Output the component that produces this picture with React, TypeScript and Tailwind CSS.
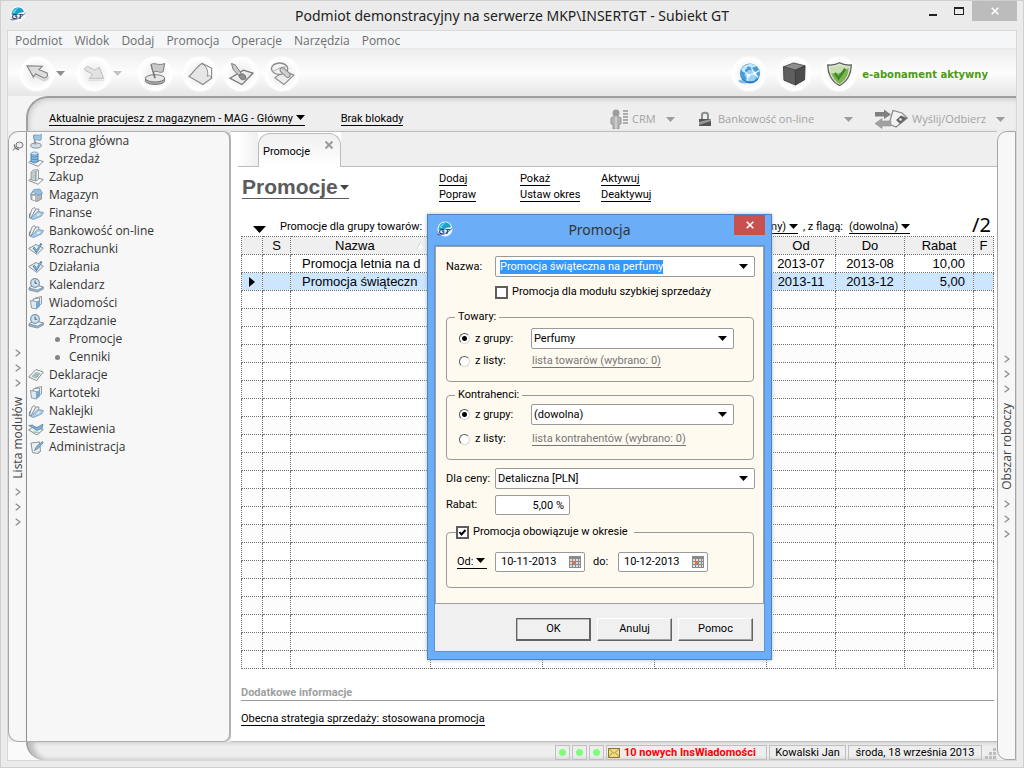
import { ReactNode, useEffect, useRef } from "react";
import clsx from "clsx";

const tahoma = "font-[Roboto,'DejaVu_Sans_Condensed',sans-serif] text-[11px]";
const segoe = "font-['Open_Sans','Noto_Sans',sans-serif]";

const Caret = ({ className = "text-black" }: { className?: string }) => (
    <svg viewBox="0 0 9 5" className={clsx("inline-block h-[5px] w-[9px] shrink-0", className)}>
        <path d="M0 0H9L4.5 5Z" fill="currentColor" />
    </svg>
);

const Logo = () => (
    <svg viewBox="0 0 16 16" className="h-4 w-4 shrink-0">
        <circle cx="8" cy="8" r="7.6" fill="#fff" opacity=".85" />
        <path d="M1.5 8.5C2 3.5 5 1.6 8.2 1.6c3.6 0 5.3 2.4 5.8 4.4L9 7 6 10Z" fill="#1ba0c8" />
        <path d="M2 7C3.5 3.5 6 2 8.5 2c-2 1.5-3 3-3.5 5Z" fill="#5fd0e0" />
        <text x="1.5" y="13" fontSize="8" fontWeight="bold" fontStyle="italic" fill="#1d3570" fontFamily="Liberation Sans">GT</text>
        <path d="M.5 13.5C5 14.5 9 13 15.5 7" fill="none" stroke="#1d3570" strokeWidth=".7" />
    </svg>
);

/* ---------- sidebar icons ---------- */

const Sheet = () => <path d="M.7 11.5 5.5 8 15.3 10.5 10 15.3Z" fill="#fafafa" stroke="#8a9097" />;

const moduleIcons: Record<string, ReactNode> = {
    flag: (
        <>
            <ellipse cx="8" cy="12.5" rx="5.5" ry="2.6" fill="#cfdfea" stroke="#8a9097" />
            <path d="M5.5 2 7.5 11.5" stroke="#7d858c" strokeWidth="1.3" />
            <path d="M5.5 2.5C8 .5 9.5 3.5 13.5 1.5L13 7C10 8.5 9 5.5 6.5 7.5Z" fill="#9cc6e6" stroke="#7b98ad" strokeWidth=".8" />
        </>
    ),
    coins: (
        <>
            <Sheet />
            <path d="M3 2.5V11C5 13 8.5 13 10 11V2.5Z" fill="#8fc0e6" />
            <ellipse cx="6.5" cy="2.5" rx="3.5" ry="1.5" fill="#d7ebf8" stroke="#5a8fb9" strokeWidth=".8" />
            <path d="M3 5c1.5 1.5 5.5 1.5 7 0M3 7.5C4.5 9 8.5 9 10 7.5M3 10c1.5 1.5 5.5 1.5 7 0M3 2.5V11M10 2.5V11" fill="none" stroke="#4f86b2" />
        </>
    ),
    bag: (
        <>
            <Sheet />
            <path d="M3 3.5 8 2V12L3 11Z" fill="#c8ced2" stroke="#8a9097" strokeWidth=".8" />
            <path d="M3 3.5 5 1 10 .7 8 2.5V12L10.5 10.5V1" fill="#e5e9ec" stroke="#8a9097" strokeWidth=".8" />
            <path d="M4.5 6H6.5V9H4.5Z" fill="#a5d5a9" />
        </>
    ),
    house: (
        <>
            <path d="M3 8 8.5 6.5 13.5 6V12L9 14.5 3 12.5Z" fill="#b5b9bc" stroke="#7f868c" strokeWidth=".8" />
            <path d="M2 8 6 2.5 12 2 14.5 6.5 9.5 8.5 6 4.5Z" fill="#94c1e4" stroke="#6c94b3" strokeWidth=".8" />
            <path d="M4.5 9H7V13.5L4.5 12.5Z" fill="#f5f5f5" />
        </>
    ),
    fan: (
        <>
            <path d="M.8 13.5 1 9 4 6.5 5 10Z" fill="#7d868e" />
            <path d="M1.5 12 4 4 6.5 2.5 7.5 4.5 3.5 13Z" fill="#f4f6f7" stroke="#7b848b" strokeWidth=".8" />
            <path d="M3 12.5 8 4 11 4 10.5 7 5 13Z" fill="#e9eef1" stroke="#7b848b" strokeWidth=".8" />
            <path d="M2.5 13.5 10 6.5 15.5 7.5 13.5 11 5.5 14.5Z" fill="#a9cdec" stroke="#6e93b1" strokeWidth=".8" />
            <path d="M8.5 10 11 8.5 12.5 9 10 11Z" fill="#eaf5fc" />
        </>
    ),
    check: (
        <>
            <path d="M.7 7.5 8 3.5 15.3 7 9 13.5Z" fill="#e6eef0" stroke="#8a9097" />
            <path d="M5.5 6.5 8.5 10.5 13.5 2.5" fill="none" stroke="#4f86ad" strokeWidth="2.2" />
            <path d="M6 7 8.5 10 12.5 4" fill="none" stroke="#a8d1ee" strokeWidth=".8" />
        </>
    ),
    clock: (
        <>
            <path d="M1 11 6 7.5 15.3 10V12L9.5 15 1 13Z" fill="#8fbce2" stroke="#7b8a95" strokeWidth=".8" />
            <path d="M1 11 6 7.5 15.3 10 9.5 13Z" fill="#f4f7f9" stroke="#7b8a95" strokeWidth=".8" />
            <circle cx="7" cy="6" r="4.3" fill="#cfe2f1" stroke="#7895ab" strokeWidth="1.2" />
            <path d="M7 3.5V6.3H9" fill="none" stroke="#40627c" />
        </>
    ),
    cards: (
        <>
            <path d="M7 3 13.5 1.5V9L9 11Z" fill="#e9ecee" stroke="#7e878e" strokeWidth=".8" />
            <path d="M5 4 11.5 3V11L7 13Z" fill="#f5f7f8" stroke="#7e878e" strokeWidth=".8" />
            <path d="M2.5 5.5 8.5 6.5V14L3.5 13Z" fill="#dceaf5" stroke="#7e878e" strokeWidth=".8" />
            <path d="M8.5 6.5 11.5 5V12L8.5 14Z" fill="#74a9d4" />
        </>
    ),
    form: (
        <>
            <path d="M.7 10 8 2.5 15.3 5 8.5 13.5Z" fill="#f2f5f2" stroke="#858d92" />
            <path d="M4 9.5 8 5.5 12 6.5 8.3 11Z" fill="#c0d8ca" stroke="#82a6a0" strokeWidth=".7" />
            <path d="M5.5 8.5 10 9.5M7 7 11 8" stroke="#739dbb" strokeWidth=".8" />
        </>
    ),
    chart: (
        <>
            <path d="M.7 9 6 5.5 15.3 8.5 9 14Z" fill="#edf4ef" stroke="#858d92" />
            <path d="M.7 4.5 4.5 4 8 7 15 3 14 7.5 8.5 9.5 5 7Z" fill="#7db1dc" stroke="#557f9f" strokeWidth=".7" />
            <path d="M5 11 11 11.5" stroke="#a4c7a7" strokeWidth="1.4" />
        </>
    ),
    pencil: (
        <>
            <path d="M3 4 11.5 3 12.5 12.5 10 14.5 4.5 13.5Z" fill="#eef1f3" stroke="#8a9197" />
            <path d="M14.5 2.5 8.5 7.5 6.5 11.5 10 9.5 15 4Z" fill="#86b9de" stroke="#56809f" strokeWidth=".8" />
            <path d="M10 14.5 10.5 12 12.5 12.5Z" fill="#a5abaf" />
        </>
    ),
};

const modules = [
    { label: "Strona główna", icon: "flag" },
    { label: "Sprzedaż", icon: "coins" },
    { label: "Zakup", icon: "bag" },
    { label: "Magazyn", icon: "house" },
    { label: "Finanse", icon: "fan" },
    { label: "Bankowość on-line", icon: "fan" },
    { label: "Rozrachunki", icon: "check" },
    { label: "Działania", icon: "check" },
    { label: "Kalendarz", icon: "clock" },
    { label: "Wiadomości", icon: "cards" },
    { label: "Zarządzanie", icon: "clock" },
    { label: "Promocje" },
    { label: "Cenniki" },
    { label: "Deklaracje", icon: "form" },
    { label: "Kartoteki", icon: "cards" },
    { label: "Naklejki", icon: "fan" },
    { label: "Zestawienia", icon: "chart" },
    { label: "Administracja", icon: "pencil" },
];

/* ---------- window header ---------- */

const TitleBar = () => (
    <header className="grid h-[29px] shrink-0 grid-cols-[1fr_auto_1fr]">
        <div className="pt-[5px] pl-[3px]"><Logo /></div>
        <h1 className="font-['Noto_Sans',sans-serif] text-[14px] leading-[30px] text-[#222]">
            Podmiot demonstracyjny na serwerze MKP\INSERTGT - Subiekt GT
        </h1>
        <div className="flex h-5 justify-end">
            <button aria-label="Minimalizuj" className="flex w-[26px] items-center justify-center pt-2">
                <span className="h-[2px] w-2 bg-[#222]" />
            </button>
            <button aria-label="Maksymalizuj" className="flex w-[26px] items-center justify-center">
                <span className="h-2 w-[10px] border border-t-2 border-[#222]" />
            </button>
            <button aria-label="Zamknij" className="flex w-[45px] items-center justify-center bg-[#bcbcbc]">
                <svg viewBox="0 0 8 8" className="h-2 w-2"><path d="M.7.7 7.3 7.3M7.3.7.7 7.3" stroke="#fff" strokeWidth="1.6" /></svg>
            </button>
        </div>
    </header>
);

const menu = ["Podmiot", "Widok", "Dodaj", "Promocja", "Operacje", "Narzędzia", "Pomoc"];

const MenuBar = () => (
    <nav className={clsx(segoe, "flex h-[18px] shrink-0 gap-3 border-b border-[#e8e8e8] bg-[#f5f6f7] pt-px pl-[7px] text-[12px] leading-[18px] text-[#6d6d6d]")}>
        {menu.map((m) => <button key={m}>{m}</button>)}
    </nav>
);

const toolIcons = {
    back: (
        <>
            <path d="M8 17 10.5 14.5 19 19C22 19.5 24 18 24 15" fill="none" stroke="#d5d5d5" strokeWidth="2" />
            <path d="M2 4 18 4.5 14.5 8 23 11.5C24.5 14 22 17.5 19 16.5L11 12.5 8.5 15.5Z" fill="#dcdcdc" stroke="#7f7f7f" strokeWidth="1.1" />
        </>
    ),
    forward: (
        <>
            <path d="M2.5 7 6 4.5 13 8.5 18 5.5 22.5 17H7.5L11 13 2.5 8Z" fill="#e2e2e2" stroke="#bcbcbc" />
            <path d="M6 19H23" stroke="#e0e0e0" strokeWidth="1.5" />
        </>
    ),
    flag: (
        <>
            <path d="M2.5 17V20C4 24.5 21 24.5 22.5 20V17Z" fill="#a9a9a9" stroke="#777" />
            <ellipse cx="12.5" cy="17" rx="10" ry="3.8" fill="#e6e6e6" stroke="#777" />
            <path d="M8.5 2.5 12.5 17" stroke="#777" strokeWidth="1.8" />
            <path d="M8.5 2.5C12 0 16 4.5 22.5 1.5L21 10C17 12.5 14.5 8 10.5 10.5Z" fill="#c9c9c9" stroke="#777" />
        </>
    ),
    sheet: (
        <>
            <path d="M1 15C6 10 10 4 14.5 1.5L24.5 6.5V17L15.5 23.5Z" fill="#e6e6e6" stroke="#8a8a8a" strokeWidth="1.2" />
            <path d="M14.5 1.5 24.5 6.5V17C23.5 14 22 13.5 20 15 21.5 10 20 5 14.5 1.5Z" fill="#fafafa" stroke="#888" />
        </>
    ),
    brush: (
        <>
            <path d="M1 17 15 8.5 25 11.5 13.5 23.5Z" fill="#ececec" stroke="#767676" strokeWidth="1.3" />
            <path d="M2.5 1.5 6.5 3 13.5 13 11 15 4.5 8Z" fill="#cacaca" stroke="#777" />
            <path d="M10.5 13.5C14 11 18 13 17.5 17.5 14 19.5 11 18.5 10.5 13.5Z" fill="#8f8f8f" stroke="#6d6d6d" />
        </>
    ),
    search: (
        <>
            <path d="M5 16.5 14 9.5 25 13.5 14.5 23.5Z" fill="#ececec" stroke="#8a8a8a" strokeWidth="1.2" />
            <ellipse cx="10" cy="7" rx="8.5" ry="6" fill="#f4f4f4" stroke="#8a8a8a" strokeWidth="1.4" />
            <path d="M2.5 9.5C6 9.5 8 5.5 17 5" fill="none" stroke="#a5a5a5" />
            <path d="M13 8.5 18.5 13.5" stroke="#868686" strokeWidth="6" strokeLinecap="round" />
            <path d="M13 8.5 18.5 13.5" stroke="#d0d0d0" strokeWidth="4" strokeLinecap="round" />
        </>
    ),
    globe: (
        <>
            <circle cx="13.5" cy="12" r="10.5" fill="#4a9bdc" />
            <path d="M4.5 8C7.5 2 16 0 20.5 4.5L15.5 6 11.5 4.5 6.5 11Z" fill="#c9e8fb" />
            <path d="M7.5 13 12.5 8 18.5 9 21.5 14 17.5 20 11.5 20Z" fill="#9ad3f5" />
            <path d="M7 9 12 14 18 12M12 14 10 20M18 12 15 6M18 12 22 16M18 12 23 9" fill="none" stroke="#e6f6ff" strokeWidth="1.3" />
            <circle cx="12" cy="14" r="1.8" fill="#fff" />
            <circle cx="18" cy="12" r="1.5" fill="#fff" />
            <path d="M4 17C9 23.5 18 23.5 23 17L17.5 20 11.5 20.5Z" fill="#2470ba" />
            <path d="M1 20C4 22 7 22.5 10 22.5L7.5 19.5 3 18.5Z" fill="#7fb9e6" />
        </>
    ),
    box: (
        <>
            <path d="M1.5 5 12 1 24 4 14 8.5Z" fill="#8d8d8d" stroke="#555" />
            <path d="M1.5 5 14 8.5V24L2 19Z" fill="#5f5f5f" stroke="#4a4a4a" />
            <path d="M14 8.5 24 4 23.5 18.5 14 24Z" fill="#4c4c4c" stroke="#3f3f3f" />
        </>
    ),
    shield: (
        <>
            <path d="M.8 3C6 3.5 10 2.5 13 .8 16 2.5 20 3.5 25.2 3 25.5 12 21 20.5 13 24.5 5 20.5.5 12 .8 3Z" fill="#dfe3d8" stroke="#5a6056" strokeWidth="1.3" />
            <path d="M3 5C8 5.5 10.5 4.500 13 3.3 15.5 4.5 18 5.5 23 5 23 13 18.5 19.5 13 23 7.5 19.5 3 13 3 5Z" fill="#c9dfb2" />
            <path d="M4.5 11.5C10 13.5 17 11 22.5 6 22.5 14 18.5 19.5 13 23 8 19.5 5.5 15.5 4.5 11.5Z" fill="#7fb352" />
            <path d="M8 11.5 12 17 19 7" fill="none" stroke="#3c8a28" strokeWidth="2.6" />
        </>
    ),
};

const ToolButton = ({ icon, label }: { icon: keyof typeof toolIcons; label: string }) => (
    <button aria-label={label} className="flex h-[34px] w-[34px] shrink-0 items-center justify-center rounded-full bg-[radial-gradient(circle,#f2f2f2_30%,#fff_65%)] shadow-[0_0_3px_#fff]">
        <svg viewBox="0 0 26 25" className="h-6 w-[25px]">{toolIcons[icon]}</svg>
    </button>
);

const Toolbar = () => (
    <div className="flex h-[47px] shrink-0 items-center bg-linear-to-b from-[#ededed] via-[#fdfdfd] to-[#e6e6e6] pt-[2px] pl-3">
        <ToolButton icon="back" label="Wstecz" />
        <Caret className="ml-[2px] text-[#8c8c8c]" />
        <div className="w-3" />
        <ToolButton icon="forward" label="Dalej" />
        <Caret className="ml-[2px] text-[#c4c4c4]" />
        <div className="ml-4 flex gap-[7px]">
            <ToolButton icon="flag" label="Strona główna" />
            <div className="ml-1 flex gap-[7px]">
                <ToolButton icon="sheet" label="Dodaj" />
                <ToolButton icon="brush" label="Popraw" />
                <ToolButton icon="search" label="Pokaż" />
            </div>
        </div>
        <div className="ml-auto flex items-center pr-[28px]">
            <div className="flex gap-[11px]">
                <ToolButton icon="globe" label="Internet" />
                <ToolButton icon="box" label="Pakiety" />
                <ToolButton icon="shield" label="Abonament" />
            </div>
            <span className="ml-[6px] pt-[2px] font-['DejaVu_Sans',sans-serif] text-[10px] font-bold text-[#4f9a16]">e-abonament aktywny</span>
        </div>
    </div>
);

const ContextBar = () => (
    <div className="h-[35px] shrink-0 bg-[#f4f4f4] pl-[18px]">
        <div className="flex h-full items-center rounded-tl-[22px] border-t-2 border-l-2 border-[#9f9f9f] bg-[#eeeeee] pt-[9px] pl-[21px] shadow-[inset_2px_2px_4px_#cfcfcf]">
            <a href="#magazyn" className={clsx(tahoma, "border-b border-black leading-[12px] whitespace-nowrap")}>
                Aktualnie pracujesz z magazynem - MAG - Główny <Caret className="mb-[2px]" />
            </a>
            <a href="#blokada" className={clsx(tahoma, "ml-9 border-b border-black leading-[12px] whitespace-nowrap")}>Brak blokady</a>
            <div className={clsx(segoe, "ml-auto flex h-5 items-center pr-[11px] text-[11px] whitespace-nowrap text-[#a3a3a3]")}>
                <svg viewBox="0 0 20 20" className="h-5 w-5">
                    <circle cx="6" cy="4" r="3.5" fill="#9c9c9c" />
                    <path d="M1 9C3 7 9 7 11 9V15H9V20H3V15H1Z" fill="#b4b4b4" stroke="#969696" />
                    <path d="M6 7V20" stroke="#e5e5e5" />
                    <path d="M13 2H18M13 5H18M13 8H18M13 11H18M13 14H18" stroke="#979797" strokeWidth="1.5" />
                </svg>
                <button className="ml-[2px] w-[34px] text-left">CRM</button>
                <Caret className="text-[#9d9d9d]" />
                <svg viewBox="0 0 14 16" className="ml-[23px] h-4 w-[14px]">
                    <path d="M4 8V4C4 1 10 1 10 4V8" fill="none" stroke="#8c8c8c" strokeWidth="2" />
                    <path d="M1 8H13V15H1Z" fill="#555" />
                    <path d="M1 11 13 8V10L1 14Z" fill="#999" />
                </svg>
                <button className="ml-[6px] w-[126px] text-left">Bankowość on-line</button>
                <Caret className="text-[#9d9d9d]" />
                <svg viewBox="0 0 34 20" className="ml-[21px] h-5 w-[34px]">
                    <path d="M15 15 19 1.5 28 4 33.5 9 22 18Z" fill="#f3f3f3" stroke="#888" strokeWidth="1.2" />
                    <path d="M22 11 27 6.500 33 9 26 15Z" fill="#666" />
                    <circle cx="26.5" cy="10.5" r="1.3" fill="#eee" />
                    <path d="M1 3H10V.5L17 5.5 10 10V7.5H1Z" fill="#808080" />
                    <path d="M17 12H8V9.5L1 14.5 8 19.5V17H17Z" fill="#a1a1a1" stroke="#909090" strokeWidth=".6" />
                </svg>
                <button className="ml-1 w-[84px] text-left">Wyślij/Odbierz</button>
                <Caret className="text-[#9d9d9d]" />
            </div>
        </div>
    </div>
);

/* ---------- side strips and module list ---------- */

const Chevrons = () => (
    <div className="flex flex-col gap-[7px]">
        {[0, 1, 2].map((i) => (
            <svg key={i} viewBox="0 0 6 8" className="h-2 w-[6px]"><path d="M.7.7 5 4 .7 7.3" fill="none" stroke="#8f8f8f" strokeWidth="1.3" /></svg>
        ))}
    </div>
);

const StripLabel = ({ children }: { children: string }) => (
    <div className="flex flex-1 flex-col items-center justify-center gap-[10px]">
        <Chevrons />
        <span className={clsx(segoe, "rotate-180 text-[12px] leading-[14px] whitespace-nowrap text-[#444] [writing-mode:vertical-rl]")}>{children}</span>
        <Chevrons />
    </div>
);

const ModuleStrip = () => (
    <div className="flex w-[18px] shrink-0 flex-col rounded-l-[10px] border border-r-0 border-[#a5a5a5] bg-[#f7f7f7] pb-[18px]">
        <svg viewBox="0 0 12 12" className="mt-2 ml-[3px] h-3 w-3">
            <ellipse cx="7.5" cy="5" rx="3.5" ry="3" fill="#eee" stroke="#777" />
            <path d="M.7 10.5 4 7.5" stroke="#777" />
            <path d="M2.5 4.5C2 7 4 9 7 9.5" fill="none" stroke="#666" strokeWidth="1.3" />
        </svg>
        <StripLabel>Lista modułów</StripLabel>
    </div>
);

const ModuleList = () => (
    <aside className="w-[205px] shrink-0 rounded-r-[8px] border border-r-2 border-[#b0b0b0] border-l-[#8f8f8f] bg-[#f7f7f7] shadow-[2px_0_4px_#ddd]">
        <ul className={clsx(segoe, "text-[12px] leading-[18px] text-[#333]")}>
            {modules.map((m) => (
                <li key={m.label} className={clsx("flex h-[18px] items-center", m.icon ? "pl-[1px]" : "pl-[28px]")}>
                    {m.icon
                        ? <svg viewBox="0 0 16 16" className="h-4 w-4">{moduleIcons[m.icon]}</svg>
                        : <span className="h-[5px] w-[5px] rounded-full bg-[#858585]" />}
                    <a href="#modul" className={m.icon ? "ml-[5px]" : "ml-[9px]"}>{m.label}</a>
                </li>
            ))}
        </ul>
    </aside>
);

/* ---------- workspace ---------- */

const columns = [
    { label: "", width: "w-[21px]" },
    { label: "S", width: "w-[28px]" },
    { label: "Nazwa", width: "w-[140px]" },
    { label: "", width: "w-[112px]" },
    { label: "", width: "w-[112px]" },
    { label: "", width: "" },
    { label: "Od", width: "w-[69px]" },
    { label: "Do", width: "w-[69px]" },
    { label: "Rabat", width: "w-[69px]" },
    { label: "F", width: "w-[20px]" },
];

const promotions = [
    { name: "Promocja letnia na d", from: "2013-07", to: "2013-08", discount: "10,00" },
    { name: "Promocja świąteczn", from: "2013-11", to: "2013-12", discount: "5,00", selected: true },
];

const cell = "h-[18px] border border-dotted border-[#6f6f6f] p-0 leading-[17px] overflow-hidden whitespace-nowrap";

const PromotionsTable = () => (
    <table className="w-full table-fixed border-collapse font-['Liberation_Sans',Arial,sans-serif] text-[13px] text-black">
        <thead>
            <tr className="bg-[#efefef]">
                {columns.map((c, i) => (
                    <th key={i} className={clsx(cell, c.width, "font-normal")}>
                        {c.label === "Nazwa" ? (
                            <div className="flex items-center pr-[6px] pl-[44px]">
                                Nazwa
                                <svg viewBox="0 0 7 7" className="ml-auto h-[7px] w-[7px]"><path d="M.5 6.5 3.5.5" stroke="#aaa" /><path d="M.5 6.5H6.5L3.5.5" fill="#fff" /></svg>
                            </div>
                        ) : c.label}
                    </th>
                ))}
            </tr>
        </thead>
        <tbody>
            {Array.from({ length: 23 }, (_, i) => {
                const p = promotions[i];
                return (
                    <tr key={i} className={p?.selected ? "bg-[#cce6ff]" : i % 2 ? "bg-[#fcfcfc]" : "bg-white"}>
                        <td className={cell}>
                            {p?.selected && <svg viewBox="0 0 6 10" className="ml-[7px] h-[10px] w-[6px]"><path d="M0 0 6 5 0 10Z" /></svg>}
                        </td>
                        <td className={cell} />
                        <td className={clsx(cell, p && "pl-[11px]")}>{p?.name}</td>
                        <td className={cell} />
                        <td className={cell} />
                        <td className={cell} />
                        <td className={clsx(cell, "text-center")}>{p?.from}</td>
                        <td className={clsx(cell, "text-center")}>{p?.to}</td>
                        <td className={clsx(cell, "pr-2 text-right")}>{p?.discount}</td>
                        <td className={cell} />
                    </tr>
                );
            })}
        </tbody>
    </table>
);

const TextLink = ({ children }: { children: ReactNode }) => (
    <a href="#akcja" className="border-b border-black leading-[12px] whitespace-nowrap">{children}</a>
);

const Workspace = () => (
    <main className="flex min-w-0 flex-1 flex-col border-y border-[#bdbdbd] bg-white pl-[7px]">
        <div className="flex h-[35px] shrink-0">
            <div className="w-5 border-b border-[#bdbdbd] bg-linear-to-r from-white to-[#efefef]" />
            <div className={clsx(tahoma, "relative mt-px flex w-[83px] rounded-t-[12px] border border-b-0 border-[#bdbdbd] bg-linear-to-b from-[#f0f0f0] to-white pt-[11px] pl-1 leading-[14px]")}>
                Promocje
                <button aria-label="Zamknij kartę" className="absolute top-[7px] right-[7px]">
                    <svg viewBox="0 0 8 8" className="h-2 w-2"><path d="M.5.5 7.5 7.5M7.5.5.5 7.5" stroke="#9b9b9b" strokeWidth="2" /></svg>
                </button>
            </div>
            <div className="flex-1 border-b border-[#bdbdbd] bg-[#efefef]" />
        </div>
        <div className="flex flex-1 flex-col pr-[3px] pl-[3px]">
            <div className="flex h-[48px] items-start">
                <h2 className="mt-[9px] w-[198px] pl-px font-['Liberation_Sans',Arial,sans-serif]">
                    <button className="flex items-center gap-[2px] border-b border-[#5b5b5b] text-[21px] leading-[22px] font-bold text-[#5b5b5b]">
                        Promocje<Caret className="text-[#444]" />
                    </button>
                </h2>
                <div className={clsx(tahoma, "mt-[6px] grid grid-cols-[81px_81px_auto] justify-items-start gap-y-[3px]")}>
                    <TextLink>Dodaj</TextLink>
                    <TextLink>Pokaż</TextLink>
                    <TextLink>Aktywuj</TextLink>
                    <TextLink>Popraw</TextLink>
                    <TextLink>Ustaw okres</TextLink>
                    <TextLink>Deaktywuj</TextLink>
                </div>
            </div>
            <div className={clsx(tahoma, "flex h-[21px] items-center pt-1")}>
                <button aria-label="Filtry" className="mt-1 ml-3 w-[27px] leading-none">
                    <svg viewBox="0 0 13 7" className="h-[7px] w-[13px]"><path d="M0 0H13L6.5 7Z" /></svg>
                </button>
                <span>Promocje dla grupy towarów:</span>
                <div className="ml-auto flex items-center">
                    <TextLink>(dowolny) <Caret className="mb-[2px]" /></TextLink>
                    <span className="mr-[6px] ml-[5px]">, z flagą:</span>
                    <TextLink>(dowolna) <Caret className="mb-[2px]" /></TextLink>
                    <span className="mr-[3px] mb-[5px] ml-[62px] font-['Noto_Sans',sans-serif] text-[20px] leading-[20px]">/2</span>
                </div>
            </div>
            <PromotionsTable />
            <h3 className={clsx(tahoma, "mt-[17px] border-b border-[#9a9a9a] leading-[14px] font-bold text-[#a0a0a0]")}>Dodatkowe informacje</h3>
            <p className={clsx(tahoma, "mt-[12px] flex")}><TextLink>Obecna strategia sprzedaży: stosowana promocja</TextLink></p>
        </div>
    </main>
);

const statusCell = "flex h-[15px] items-center border border-[#c0c0c0] leading-[13px] whitespace-nowrap";

const StatusBar = () => (
    <footer className="h-[18px] shrink-0 bg-[#fafafa] pl-[18px]">
        <div className={clsx(tahoma, "flex h-full items-end justify-end gap-[2px] rounded-bl-[20px] border-l-2 border-[#a0a0a0] bg-[#eeeeee] shadow-[inset_5px_0_5px_#bbb]")}>
            {[0, 1, 2].map((i) => (
                <div key={i} className={clsx(statusCell, "w-[15px] justify-center")}><span className="h-[7px] w-[7px] rounded-full bg-[#7bff7b]" /></div>
            ))}
            <div className={clsx(statusCell, "min-w-[161px] gap-1 pr-1 pl-[1px] font-bold text-[#ff0000]")}>
                <svg viewBox="0 0 12 10" className="h-[10px] w-3 shrink-0"><path d="M.5.5H11.5V9.5H.5Z" fill="#f0dc82" stroke="#8a7430" /><path d="M.5.5 6 5.5 11.5.5M.5 9.5 4.5 4.5M11.5 9.5 7.5 4.5" fill="none" stroke="#a08840" strokeWidth=".8" /></svg>
                10 nowych InsWiadomości
            </div>
            <div className={clsx(statusCell, "w-[77px] justify-center")}>Kowalski Jan</div>
            <div className={clsx(statusCell, "w-[134px] justify-center")}>środa, 18 września 2013</div>
            <svg viewBox="0 0 12 12" className="ml-px h-3 w-3">
                <path d="M8 0h3v3H8zM4 4h3v3H4zM8 4h3v3H8zM0 8h3v3H0zM4 8h3v3H4zM8 8h3v3H8z" fill="#bdbdbd" />
            </svg>
        </div>
    </footer>
);

/* ---------- dialog ---------- */

const Combo = ({ id, value, className }: { id: string; value: string; className: string }) => (
    <div className={clsx("relative", className)}>
        <select id={id} defaultValue={value} className="h-[21px] w-full appearance-none rounded-[2px] border border-[#9a9a9a] bg-white pr-5 pl-[2px] outline-none">
            <option>{value}</option>
        </select>
        <Caret className="pointer-events-none absolute top-[8px] right-[7px]" />
    </div>
);

const DateBox = ({ id, value }: { id: string; value: string }) => (
    <div className="flex h-5 w-[90px] items-center rounded-[2px] border border-[#9a9a9a] bg-white pr-[3px] pl-[5px]">
        <input id={id} defaultValue={value} className="min-w-0 flex-1 outline-none" />
        <svg viewBox="0 0 12 12" className="h-3 w-3">
            <path d="M0 0H12V12H0Z" fill="#8b8b8b" />
            <path d="M1 3h2v2H1zM4 3h2v2H4zM7 3h2v2H7zM10 3h1v2h-1zM1 6h2v2H1zM7 6h2v2H7zM10 6h1v2h-1zM1 9h2v2H1zM4 9h2v2H4zM7 9h2v2H7zM10 9h1v2h-1z" fill="#ddd" />
            <path d="M3 5H6V8H3Z" fill="#e8703f" />
        </svg>
    </div>
);

const Radio = ({ id, name, checked }: { id: string; name: string; checked?: boolean }) => (
    <input
        id={id}
        type="radio"
        name={name}
        defaultChecked={checked}
        className="h-[11px] w-[11px] appearance-none rounded-full border border-[#d8d8d8] border-t-[#555] border-l-[#555] bg-white checked:bg-[radial-gradient(circle,#000_2px,#fff_3px)]"
    />
);

const CheckBox = ({ id, checked }: { id: string; checked?: boolean }) => (
    <span className="relative flex">
        <input id={id} type="checkbox" defaultChecked={checked} className="peer h-[13px] w-[13px] appearance-none border-2 border-[#5d5d5d] bg-white" />
        <svg viewBox="0 0 13 13" className="pointer-events-none absolute inset-0 hidden h-[13px] w-[13px] peer-checked:block">
            <path d="M3.5 6 5.5 8.5 9.5 4" fill="none" stroke="#000" strokeWidth="2" />
        </svg>
    </span>
);

interface GroupBoxProps {
    title: string;
    name: string;
    value: string;
    list: string;
    roomy?: boolean;
}

const GroupBox = ({ title, name, value, list, roomy }: GroupBoxProps) => (
    <fieldset className="mr-px rounded-[4px] border border-[#9a9a9a] pb-[13px] pl-[12px]">
        <legend className="-ml-[4px] px-[3px] leading-[14px]">{title}</legend>
        <div className={clsx("flex items-center", roomy ? "mt-1" : "mt-[2px]")}>
            <Radio id={`${name}-grupa`} name={name} checked />
            <label htmlFor={`${name}-grupa`} className="ml-[5px] w-[56px]">z grupy:</label>
            <Combo id={`${name}-wybor`} value={value} className="w-[203px]" />
        </div>
        <div className={clsx("flex h-[14px] items-center", roomy ? "mt-[5px]" : "mt-[7px]")}>
            <Radio id={`${name}-lista`} name={name} />
            <label htmlFor={`${name}-lista`} className="ml-[5px] w-[57px]">z listy:</label>
            <a href="#lista" className="border-b border-[#777] leading-[12px] text-[#777]">{list}</a>
        </div>
    </fieldset>
);

const DialogButton = ({ children, primary }: { children: string; primary?: boolean }) => (
    <button className={clsx("h-[23px] w-[75px] border bg-[#f0f0f0]", primary
        ? "border-[#636363] shadow-[inset_-1px_-1px_#636363,inset_1px_1px_#bbb]"
        : "border-white border-r-[#636363] border-b-[#636363] shadow-[inset_-1px_-1px_#a0a0a0]")}>
        {children}
    </button>
);

const PromotionDialog = () => {
    const nameRef = useRef<HTMLInputElement>(null);

    // the name opens ready to be overwritten
    useEffect(() => {
        nameRef.current?.focus();
        nameRef.current?.select();
    }, []);

    return (
        <div role="dialog" aria-label="Promocja" className="absolute top-[213px] left-[426px] w-[345px] border border-[#4b84c4] bg-[#6badf6] px-[6px] pb-[7px] text-black shadow-[0_0_4px_#bbb]">
            <div className="grid h-[30px] grid-cols-[1fr_auto_1fr]">
                <div className="pt-[6px] pl-[3px]"><Logo /></div>
                <h2 className="font-['Noto_Sans',sans-serif] text-[14px] leading-[30px] text-[#333]">Promocja</h2>
                <button aria-label="Zamknij okno" className="flex h-5 w-[31px] items-center justify-center justify-self-end bg-[#c75050]">
                    <svg viewBox="0 0 8 8" className="h-2 w-2"><path d="M.7.7 7.3 7.3M7.3.7.7 7.3" stroke="#fff" strokeWidth="1.6" /></svg>
                </button>
            </div>
            <form className={clsx(tahoma, "border border-[#5c93d0] bg-[#f0f0f0]")} onSubmit={(e) => e.preventDefault()}>
                <div className="border border-[#a0a0a0] bg-[#fffaf0] pt-[9px] pr-2 pb-[15px] pl-[10px] leading-[14px]">
                    <div className="flex items-center">
                        <label htmlFor="nazwa" className="w-[49px]">Nazwa:</label>
                        <div className="flex h-[21px] flex-1 items-center rounded-[2px] border border-[#9a9a9a] bg-white pr-[6px] pl-1">
                            <input id="nazwa" ref={nameRef} defaultValue="Promocja świąteczna na perfumy" className="h-[14px] min-w-0 flex-1 outline-none selection:bg-[#3399ff] selection:text-white" />
                            <button aria-label="Rozwiń" className="flex"><Caret /></button>
                        </div>
                    </div>
                    <div className="mt-[8px] flex items-center gap-1 pl-[49px]">
                        <CheckBox id="szybka" />
                        <label htmlFor="szybka">Promocja dla modułu szybkiej sprzedaży</label>
                    </div>
                    <div className="mt-[11px]">
                        <GroupBox title="Towary:" name="towary" value="Perfumy" list="lista towarów (wybrano: 0)" roomy />
                    </div>
                    <div className="mt-[6px]">
                        <GroupBox title="Kontrahenci:" name="kontrahenci" value="(dowolna)" list="lista kontrahentów (wybrano: 0)" />
                    </div>
                    <div className="mt-2 flex items-center">
                        <label htmlFor="cena" className="w-[49px] whitespace-nowrap">Dla ceny:</label>
                        <Combo id="cena" value="Detaliczna [PLN]" className="flex-1" />
                    </div>
                    <div className="mt-[6px] flex items-center">
                        <label htmlFor="rabat" className="w-[49px]">Rabat:</label>
                        <input id="rabat" defaultValue="5,00 %" className="h-5 w-[75px] rounded-[2px] border border-[#9a9a9a] bg-white pr-[5px] text-right outline-none" />
                    </div>
                    <fieldset className="mt-[10px] mr-px rounded-[4px] border border-[#9a9a9a] pb-[15px] pl-[10px]">
                        <legend className="-ml-px flex items-center gap-1 pr-[6px]">
                            <CheckBox id="okres" checked />
                            <label htmlFor="okres">Promocja obowiązuje w okresie</label>
                        </legend>
                        <div className="mt-[13px] flex items-center">
                            <label htmlFor="od" className="mr-2 w-[30px] border-b border-black leading-[12px] whitespace-nowrap">Od: <Caret className="mb-[2px]" /></label>
                            <DateBox id="od" value="10-11-2013" />
                            <label htmlFor="do" className="ml-2 w-[25px]">do:</label>
                            <DateBox id="do" value="10-12-2013" />
                        </div>
                    </fieldset>
                </div>
                <div className="flex justify-end gap-[6px] pt-[14px] pr-[11px] pb-[10px]">
                    <DialogButton primary>OK</DialogButton>
                    <DialogButton>Anuluj</DialogButton>
                    <DialogButton>Pomoc</DialogButton>
                </div>
            </form>
        </div>
    );
};

export default function App() {
    return (
        <div className="relative flex min-h-screen flex-col border border-[#cfcfcf] bg-[#ebebeb] px-[6px] pb-[6px]">
            <TitleBar />
            <div className="flex flex-1 flex-col border border-[#d9d9d9]">
                <MenuBar />
                <Toolbar />
                <ContextBar />
                <div className="flex flex-1 bg-[#eeeeee]">
                    <div className="flex min-w-0 flex-1 flex-col">
                        <div className="flex flex-1">
                            <ModuleStrip />
                            <ModuleList />
                            <Workspace />
                        </div>
                        <StatusBar />
                    </div>
                    <div className="flex w-[19px] shrink-0 flex-col rounded-l-[10px] border border-[#a5a5a5] bg-[#f7f7f7] pt-[2px]">
                        <StripLabel>Obszar roboczy</StripLabel>
                    </div>
                </div>
            </div>
            <PromotionDialog />
        </div>
    );
}
